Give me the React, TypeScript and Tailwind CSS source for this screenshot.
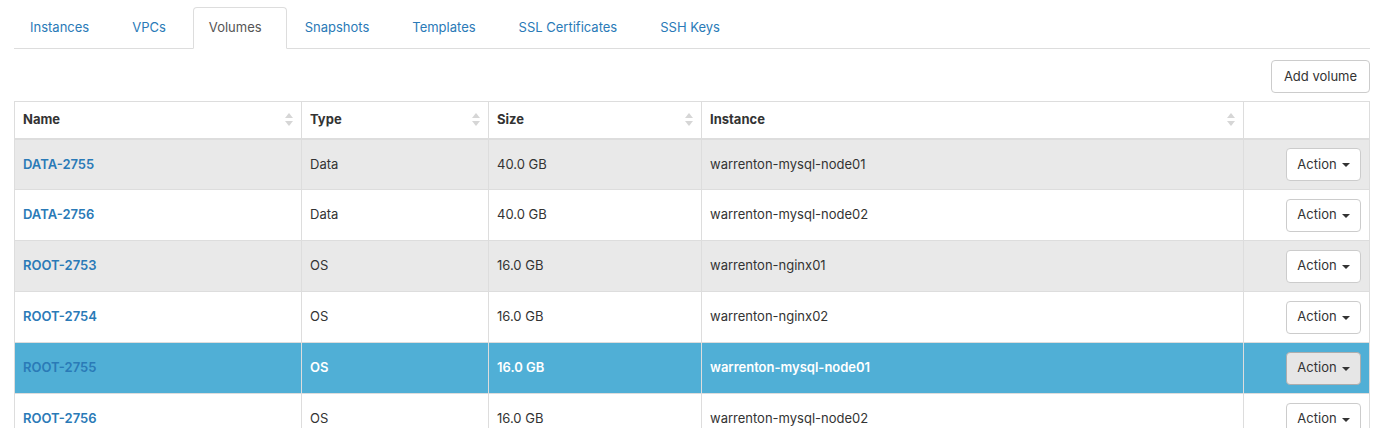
const tabs = ["Instances", "VPCs", "Volumes", "Snapshots", "Templates", "SSL Certificates", "SSH Keys"];

const columns = [
  { label: "Name", width: "w-[287px]", sortable: true },
  { label: "Type", width: "w-[187px]", sortable: true },
  { label: "Size", width: "w-[213px]", sortable: true },
  { label: "Instance", width: "w-[542px]", sortable: true },
  { label: "", width: "w-[126px]", sortable: false },
];

const volumes = [
  { name: "DATA-2755", type: "Data", size: "40.0 GB", instance: "warrenton-mysql-node01" },
  { name: "DATA-2756", type: "Data", size: "40.0 GB", instance: "warrenton-mysql-node02" },
  { name: "ROOT-2753", type: "OS", size: "16.0 GB", instance: "warrenton-nginx01" },
  { name: "ROOT-2754", type: "OS", size: "16.0 GB", instance: "warrenton-nginx02" },
  { name: "ROOT-2755", type: "OS", size: "16.0 GB", instance: "warrenton-mysql-node01", selected: true },
  { name: "ROOT-2756", type: "OS", size: "16.0 GB", instance: "warrenton-mysql-node02" },
];

function SortIcon() {
  return (
    <svg width="8" height="13" viewBox="0 0 8 13" className="shrink-0">
      <path d="M4 0 L8 5 L0 5 Z" fill="#d6d6d6" />
      <path d="M4 13 L8 8 L0 8 Z" fill="#d6d6d6" />
    </svg>
  );
}

function Caret() {
  return (
    <svg width="8" height="4" viewBox="0 0 8 4" className="ml-[5px] mt-[2px]">
      <path d="M0 0 L8 0 L4 4 Z" fill="#333" />
    </svg>
  );
}

export default function App() {
  return (
    <div className="bg-white pl-[14px] pr-[9px] pt-[7px] text-[13px] text-[#333]" style={{ fontFamily: "Inter, 'Liberation Sans', sans-serif" }}>
      {/* tabs */}
      <ul className="flex border-b border-[#ddd]">
        {tabs.map((t) => {
          const active = t === "Volumes";
          return (
            <li key={t} className="mr-[2px] -mb-px">
              <span
                className={
                  active
                    ? "block h-[42px] pl-[15px] pr-[24px] leading-[38px] rounded-t-[4px] border border-[#ddd] border-b-white bg-white text-[#555]"
                    : "block h-[42px] pl-[15px] pr-[24px] leading-[38px] border border-transparent text-[#2a7ab7]"
                }
              >
                {t}
              </span>
            </li>
          );
        })}
      </ul>

      {/* toolbar */}
      <div className="flex justify-end pt-[11px] pb-[8px]">
        <button className="h-[33px] w-[99px] rounded-[4px] border border-[#ccc] bg-white text-[13px] text-[#333]">
          Add volume
        </button>
      </div>

      {/* table */}
      <table className="w-[1355px] table-fixed border-collapse border border-[#ddd]">
        <thead>
          <tr className="h-[37px]">
            {columns.map((c, i) => (
              <th key={i} className={`${c.width} border border-b-2 border-[#ddd] px-[8px] text-left font-bold`}>
                <div className="flex items-center justify-between">
                  <span>{c.label}</span>
                  {c.sortable && <SortIcon />}
                </div>
              </th>
            ))}
          </tr>
        </thead>
        <tbody>
          {volumes.map((v, i) => {
            const rowBg = v.selected ? "bg-[#50afd6]" : i % 2 === 0 ? "bg-[#e9e9e9]" : "bg-white";
            const cell = v.selected
              ? "border border-[#ddd] px-[8px] text-white font-semibold"
              : "border border-[#ddd] px-[8px]";
            return (
              <tr key={v.name} className={`h-[51px] ${rowBg}`}>
                <td className="border border-[#ddd] px-[8px]">
                  <a className="text-[#2a7ab7] font-semibold">{v.name}</a>
                </td>
                <td className={cell}>{v.type}</td>
                <td className={cell}>{v.size}</td>
                <td className={cell}>{v.instance}</td>
                <td className="border border-[#ddd] px-[8px] text-right">
                  <button
                    className={
                      v.selected
                        ? "inline-flex h-[33px] w-[75px] items-center justify-center rounded-[4px] border border-[#adadad] bg-[#e6e6e6] text-[13px] text-[#333]"
                        : "inline-flex h-[33px] w-[75px] items-center justify-center rounded-[4px] border border-[#ccc] bg-white text-[13px] text-[#333]"
                    }
                  >
                    Action
                    <Caret />
                  </button>
                </td>
              </tr>
            );
          })}
        </tbody>
      </table>
    </div>
  );
}
